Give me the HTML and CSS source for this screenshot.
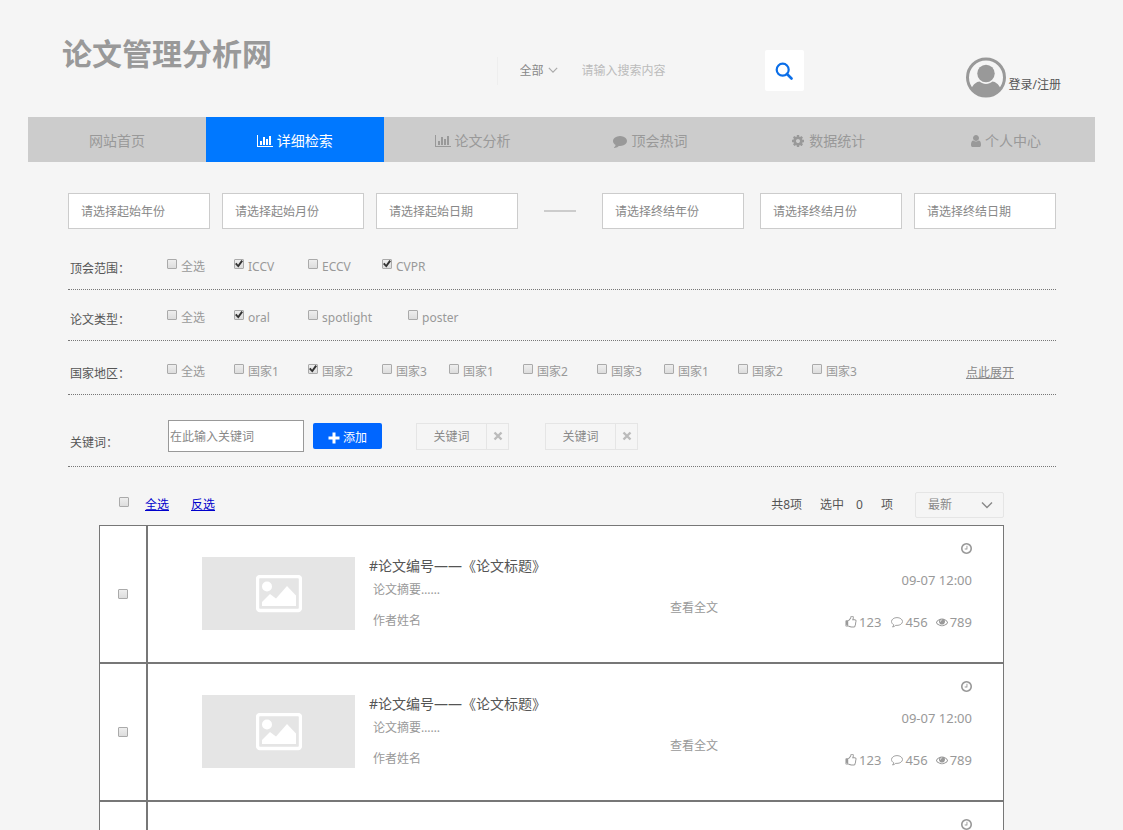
FILE: index.html
```html
<!DOCTYPE html>
<html lang="zh-CN">
<head>
<meta charset="utf-8">
<meta name="viewport" content="width=device-width, initial-scale=1">
<title>论文管理分析网</title>
<link rel="stylesheet" href="styles.css">
</head>
<body>
<svg class="sprite" aria-hidden="true">
  <symbol id="i-chart" viewBox="0 0 2048 1792"><path d="M640 896v512h-256v-512h256zm384-512v1024h-256v-1024h256zm1024 1152v128h-2048v-1536h128v1408h1920zm-640-896v768h-256v-768h256zm384-384v1152h-256v-1152h256z"/></symbol>
  <symbol id="i-comment" viewBox="0 0 1792 1792"><path d="M1792 896q0 174-120 321.5t-326 233-450 85.5q-70 0-145-8-198 175-460 242-49 14-114 22-17 2-30.5-9t-17.5-29v-1q-3-4-.5-12t2-10 4.5-9.5l6-9 7-8.5 8-9q7-8 31-34.5t34.5-38 31-39.5 32.5-51 27-59 26-76q-157-89-247.5-220t-90.5-281q0-130 71-248.5t191-204.5 286-136.5 348-50.5q244 0 450 85.5t326 233 120 321.5z"/></symbol>
  <symbol id="i-cog" viewBox="0 0 1792 1792"><path d="M1152 896q0-106-75-181t-181-75-181 75-75 181 75 181 181 75 181-75 75-181zm512-109v222q0 12-8 23t-20 13l-185 28q-19 54-39 91 35 50 107 138 10 12 10 25t-9 23q-27 37-99 108t-94 71q-12 0-26-9l-138-108q-44 23-91 38-16 136-29 186-7 28-36 28h-222q-14 0-24.5-8.5t-11.5-21.5l-28-184q-49-16-90-37l-141 107q-10 9-25 9-14 0-25-11-126-114-165-168-7-10-7-23 0-12 8-23 15-21 51-66.5t54-70.5q-27-50-41-99l-183-27q-13-2-21-12.5t-8-23.5v-222q0-12 8-23t19-13l186-28q14-46 39-92-40-57-107-138-10-12-10-24 0-10 9-23 26-36 98.5-107.5t94.5-71.5q13 0 26 10l138 107q44-23 91-38 16-136 29-186 7-28 36-28h222q14 0 24.5 8.5t11.5 21.5l28 184q49 16 90 37l142-107q9-9 24-9 13 0 25 10 129 119 165 170 7 8 7 22 0 12-8 23-15 21-51 66.5t-54 70.5q26 50 41 98l183 28q13 2 21 12.5t8 23.5z"/></symbol>
  <symbol id="i-user" viewBox="256 0 1280 1792"><path d="M1536 1399q0 109-62.5 187t-150.5 78h-854q-88 0-150.5-78t-62.5-187q0-85 8.5-160.5t31.5-152 58.5-131 94-89 134.5-34.5q131 128 313 128t313-128q76 0 134.5 34.5t94 89 58.5 131 31.5 152 8.5 160.5zm-256-887q0 159-112.5 271.5t-271.5 112.5-271.5-112.5-112.5-271.5 112.5-271.5 271.5-112.5 271.5 112.5 112.5 271.5z"/></symbol>
  <symbol id="i-clock" viewBox="128 128 1536 1536"><path d="M1024 544v448q0 14-9 23t-23 9h-320q-14 0-23-9t-9-23v-64q0-14 9-23t23-9h224v-352q0-14 9-23t23-9h64q14 0 23 9t9 23zm416 352q0-148-73-273t-198-198-273-73-273 73-198 198-73 273 73 273 198 198 273 73 273-73 198-198 73-273zm224 0q0 209-103 385.5t-279.5 279.5-385.5 103-385.5-103-279.5-279.5-103-385.5 103-385.5 279.5-279.5 385.5-103 385.5 103 279.5 279.5 103 385.5z"/></symbol>
  <symbol id="i-thumb" viewBox="64 64 1664 1664"><path d="M384 1344q0-26-19-45t-45-19-45 19-19 45 19 45 45 19 45-19 19-45zm1152-576q0-51-39-89.5t-89-38.5h-352q0-58 48-159.5t48-160.5q0-98-32-145t-128-47q-26 26-38 85t-30.5 125.5-59.5 109.5q-22 23-77 91-4 5-23 30t-31.5 41-34.5 42.5-40 44-38.5 35.5-40 27-35.5 9h-32v640h32q13 0 31.5 3t33 6.5 38 11 35 11.5 35.5 12.5 29 10.5q211 73 342 73h121q192 0 192-167 0-26-5-56 30-16 47.5-52.5t17.5-73.5-18-69q53-50 53-119 0-25-10-55.5t-25-47.5q32-1 53.5-47t21.5-81zm128-1q0 89-49 163 9 33 9 69 0 77-38 144 3 21 3 43 0 101-60 178 1 139-85 219.5t-227 80.5h-129q-96 0-189.5-22.5t-216.5-65.5q-116-40-138-40h-288q-53 0-90.5-37.5t-37.5-90.5v-640q0-53 37.5-90.5t90.5-37.5h274q36-24 137-155 58-75 107-128 24-25 35.5-85.5t30.5-126.5 62-108q39-37 90-37 84 0 151 32.5t102 101.5 35 186q0 93-48 192h176q104 0 180 76t76 179z"/></symbol>
  <symbol id="i-bubble" viewBox="0 0 12 12"><path d="M6 1.6c3 0 5.500 1.700 5.500 3.900S9 9.400 6 9.400c-.4 0-.8 0-1.200-.1C3.900 10.200 2.800 10.800 1.500 11c.7-.7 1.100-1.400 1.200-2.300C1.300 8 .5 6.800.5 5.500.5 3.300 3 1.600 6 1.600z" fill="none" stroke="currentColor" stroke-width=".9" stroke-linejoin="round"/></symbol>
  <symbol id="i-eye" viewBox="0 0 1792 1792"><path d="M1664 960q-152-236-381-353 61 104 61 225 0 185-131.500 316.500t-316.500 131.500-316.500-131.500-131.500-316.500q0-121 61-225-229 117-381 353 133 205 333.500 326.500t434.500 121.500 434.500-121.500 333.500-326.500zm-720-384q0-20-14-34t-34-14q-125 0-214.500 89.500t-89.500 214.500q0 20 14 34t34 14 34-14 14-34q0-86 61-147t147-61q20 0 34-14t14-34zm848 384q0 34-20 69-140 230-376.500 368.500t-499.500 138.500-499.500-139-376.500-368q-20-35-20-69t20-69q140-229 376.500-368t499.500-139 499.500 139 376.500 368q20 35 20 69z"/></symbol>
  <symbol id="i-chevron" viewBox="0 0 12 12"><path d="M1 3.500l5 5 5-5" fill="none" stroke="currentColor" stroke-width="1.400"/></symbol>
  <symbol id="i-search" viewBox="0 0 18 18"><circle cx="7.700" cy="7.700" r="6" fill="none" stroke="currentColor" stroke-width="2.200"/><path d="M12 12l4.500 4.500" stroke="currentColor" stroke-width="2.600" stroke-linecap="round"/></symbol>
  <symbol id="i-plus" viewBox="0 0 12 12"><path d="M4.500.5h3v4h4v3h-4v4h-3v-4h-4v-3h4z"/></symbol>
  <symbol id="i-times" viewBox="0 0 10 10"><path d="M1.500 1.500l7 7M8.500 1.500l-7 7" stroke="currentColor" stroke-width="2.400"/></symbol>
  <symbol id="i-avatar" viewBox="0 0 40 40"><circle cx="20" cy="20" r="18.500" fill="none" stroke="currentColor" stroke-width="3"/><circle cx="20" cy="16" r="8.700"/><path d="M5.500 31c2-4.500 5-6.500 8-6.900 2 1.600 4 2.400 6.500 2.400s4.500-.8 6.500-2.400c3 .4 6 2.400 8 6.900-3.500 5-8.500 8-14.500 8s-11-3-14.500-8z"/></symbol>
  <symbol id="i-image" viewBox="0 0 46 38"><rect x="1.500" y="1.500" width="43" height="34" rx="2.500" fill="none" stroke="currentColor" stroke-width="3.400"/><circle cx="11" cy="11.500" r="5"/><path d="M6 31v-4l8-8 6 4.500L31 11l9 9.500V31z"/></symbol>
</svg>

<div class="page">
  <header class="header">
    <h1 class="brand">论文管理分析网</h1>
    <form class="search">
      <span class="scope">
        <select class="scope-select" aria-label="搜索范围"><option>全部</option></select>
        <svg class="scope-arrow"><use href="#i-chevron"/></svg>
      </span>
      <input class="search-input" type="text" placeholder="请输入搜索内容" aria-label="搜索内容">
      <button class="search-btn" type="button" aria-label="搜索"><svg class="search-icon"><use href="#i-search"/></svg></button>
    </form>
    <a class="account" href="#"><svg class="avatar"><use href="#i-avatar"/></svg><span class="account-text">登录/注册</span></a>
  </header>

  <nav class="nav">
    <a class="nav-item" href="#">网站首页</a>
    <a class="nav-item active" href="#"><svg class="nav-icon wide"><use href="#i-chart"/></svg>详细检索</a>
    <a class="nav-item" href="#"><svg class="nav-icon wide"><use href="#i-chart"/></svg>论文分析</a>
    <a class="nav-item" href="#"><svg class="nav-icon"><use href="#i-comment"/></svg>顶会热词</a>
    <a class="nav-item" href="#"><svg class="nav-icon"><use href="#i-cog"/></svg>数据统计</a>
    <a class="nav-item" href="#"><svg class="nav-icon slim"><use href="#i-user"/></svg>个人中心</a>
  </nav>

  <main>
    <form class="filters">
      <div class="dates">
        <div class="date-group">
          <input class="date" type="text" placeholder="请选择起始年份" aria-label="起始年份">
          <input class="date" type="text" placeholder="请选择起始月份" aria-label="起始月份">
          <input class="date" type="text" placeholder="请选择起始日期" aria-label="起始日期">
        </div>
        <span class="dash"></span>
        <div class="date-group end">
          <input class="date" type="text" placeholder="请选择终结年份" aria-label="终结年份">
          <input class="date" type="text" placeholder="请选择终结月份" aria-label="终结月份">
          <input class="date" type="text" placeholder="请选择终结日期" aria-label="终结日期">
        </div>
      </div>

      <div class="row">
        <span class="row-label">顶会范围：</span>
        <div class="options">
          <label class="option short"><input class="check" type="checkbox">全选</label>
          <label class="option"><input class="check" type="checkbox" checked>ICCV</label>
          <label class="option"><input class="check" type="checkbox">ECCV</label>
          <label class="option"><input class="check" type="checkbox" checked>CVPR</label>
        </div>
      </div>

      <div class="row">
        <span class="row-label">论文类型：</span>
        <div class="options">
          <label class="option short"><input class="check" type="checkbox">全选</label>
          <label class="option"><input class="check" type="checkbox" checked>oral</label>
          <label class="option long"><input class="check" type="checkbox">spotlight</label>
          <label class="option"><input class="check" type="checkbox">poster</label>
        </div>
      </div>

      <div class="row tall">
        <span class="row-label">国家地区：</span>
        <div class="options">
          <label class="option short"><input class="check" type="checkbox">全选</label>
          <label class="option"><input class="check" type="checkbox">国家1</label>
          <label class="option"><input class="check" type="checkbox" checked>国家2</label>
          <label class="option short"><input class="check" type="checkbox">国家3</label>
          <label class="option"><input class="check" type="checkbox">国家1</label>
          <label class="option"><input class="check" type="checkbox">国家2</label>
          <label class="option short"><input class="check" type="checkbox">国家3</label>
          <label class="option"><input class="check" type="checkbox">国家1</label>
          <label class="option"><input class="check" type="checkbox">国家2</label>
          <label class="option"><input class="check" type="checkbox">国家3</label>
        </div>
        <a class="expand" href="#">点此展开</a>
      </div>

      <div class="row keywords">
        <label class="row-label" for="keyword">关键词：</label>
        <input class="keyword" id="keyword" type="text" placeholder="在此输入关键词">
        <button class="add" type="button"><svg class="add-icon"><use href="#i-plus"/></svg>添加</button>
        <div class="tags">
          <span class="tag"><span class="tag-text">关键词</span><button class="tag-x" type="button" aria-label="删除"><svg class="tag-icon"><use href="#i-times"/></svg></button></span>
          <span class="tag"><span class="tag-text">关键词</span><button class="tag-x" type="button" aria-label="删除"><svg class="tag-icon"><use href="#i-times"/></svg></button></span>
        </div>
      </div>
    </form>

    <section class="results">
      <div class="toolbar">
        <input class="check" type="checkbox" aria-label="选择本页">
        <a class="pick" href="#">全选</a>
        <a class="pick" href="#">反选</a>
        <div class="counts"><span>共8项</span><span>选中</span><span>0</span><span>项</span></div>
        <span class="sort">
          <select class="sort-select" aria-label="排序"><option>最新</option></select>
          <svg class="sort-arrow"><use href="#i-chevron"/></svg>
        </span>
      </div>

      <article class="paper">
        <div class="pick-cell"><input class="check" type="checkbox" aria-label="选择论文"></div>
        <div class="card">
          <div class="thumb"><svg class="thumb-icon"><use href="#i-image"/></svg></div>
          <div class="info">
            <h2 class="title">#论文编号——《论文标题》</h2>
            <p class="abstract">论文摘要……</p>
            <p class="author">作者姓名</p>
          </div>
          <a class="view" href="#">查看全文</a>
          <div class="meta">
            <svg class="clock"><use href="#i-clock"/></svg>
            <time class="time">09-07 12:00</time>
            <div class="stats">
              <span class="stat"><svg class="stat-icon"><use href="#i-thumb"/></svg>123</span>
              <span class="stat"><svg class="stat-icon"><use href="#i-bubble"/></svg>456</span>
              <span class="stat"><svg class="stat-icon"><use href="#i-eye"/></svg>789</span>
            </div>
          </div>
        </div>
      </article>

      <article class="paper">
        <div class="pick-cell"><input class="check" type="checkbox" aria-label="选择论文"></div>
        <div class="card">
          <div class="thumb"><svg class="thumb-icon"><use href="#i-image"/></svg></div>
          <div class="info">
            <h2 class="title">#论文编号——《论文标题》</h2>
            <p class="abstract">论文摘要……</p>
            <p class="author">作者姓名</p>
          </div>
          <a class="view" href="#">查看全文</a>
          <div class="meta">
            <svg class="clock"><use href="#i-clock"/></svg>
            <time class="time">09-07 12:00</time>
            <div class="stats">
              <span class="stat"><svg class="stat-icon"><use href="#i-thumb"/></svg>123</span>
              <span class="stat"><svg class="stat-icon"><use href="#i-bubble"/></svg>456</span>
              <span class="stat"><svg class="stat-icon"><use href="#i-eye"/></svg>789</span>
            </div>
          </div>
        </div>
      </article>

      <article class="paper">
        <div class="pick-cell"><input class="check" type="checkbox" aria-label="选择论文"></div>
        <div class="card">
          <div class="thumb"><svg class="thumb-icon"><use href="#i-image"/></svg></div>
          <div class="info">
            <h2 class="title">#论文编号——《论文标题》</h2>
            <p class="abstract">论文摘要……</p>
            <p class="author">作者姓名</p>
          </div>
          <a class="view" href="#">查看全文</a>
          <div class="meta">
            <svg class="clock"><use href="#i-clock"/></svg>
            <time class="time">09-07 12:00</time>
            <div class="stats">
              <span class="stat"><svg class="stat-icon"><use href="#i-thumb"/></svg>123</span>
              <span class="stat"><svg class="stat-icon"><use href="#i-bubble"/></svg>456</span>
              <span class="stat"><svg class="stat-icon"><use href="#i-eye"/></svg>789</span>
            </div>
          </div>
        </div>
      </article>
    </section>
  </main>
</div>
</body>
</html>
```

FILE: styles.css
```css
* {
  box-sizing: border-box;
}

body {
  margin: 0;
  background: #f5f5f5;
  color: #555;
  font: 12px/20px "Noto Sans", "Noto Sans CJK SC", sans-serif;
}

input,
select,
button {
  margin: 0;
  font: inherit;
  color: inherit;
}

a {
  color: inherit;
  text-decoration: none;
}

svg {
  display: block;
  flex: none;
  fill: currentColor;
}

.sprite {
  position: absolute;
  width: 0;
  height: 0;
}

.page {
  padding: 0 28px;
}

/* Header */
.header {
  display: flex;
  align-items: flex-start;
  padding: 32px 34px 0 34px;
  height: 117px;
}

.brand {
  flex: 1;
  margin: 0;
  color: #999;
  font-size: 30px;
  line-height: 44px;
  font-weight: 700;
}

.search {
  display: flex;
  align-items: center;
  width: 307px;
  margin: 18px 162px 0 0;
}

.scope {
  position: relative;
  width: 82px;
  border-left: 1px solid #eee;
  color: #888;
}

.scope-select {
  appearance: none;
  width: 100%;
  height: 28px;
  padding: 0 0 0 22px;
  border: 0;
  background: none;
}

.scope-arrow {
  position: absolute;
  left: 50px;
  top: 8px;
  width: 10px;
  height: 10px;
  color: #aaa;
  pointer-events: none;
}

.search-input {
  flex: 1;
  min-width: 0;
  height: 28px;
  padding: 0 3px;
  border: 0;
  background: none;
}

.search-input::placeholder {
  color: #bbb;
}

.search-btn {
  display: grid;
  place-items: center;
  width: 39px;
  height: 41px;
  padding: 0;
  border: 0;
  border-radius: 2px;
  background: #fff;
  color: #0a6ee8;
}

.search-icon {
  width: 18px;
  height: 18px;
}

.account {
  display: flex;
  align-items: center;
  gap: 3px;
  margin-top: 25px;
}

.account-text {
  padding-top: 14px;
}

.avatar {
  width: 40px;
  height: 41px;
  color: #999;
}

/* Navigation */
.nav {
  display: grid;
  grid-template-columns: repeat(6, 1fr);
  background: #ccc;
}

.nav-item {
  display: flex;
  align-items: center;
  justify-content: center;
  gap: 4px;
  height: 45px;
  padding-top: 2px;
  color: #999;
  font-size: 14px;
}

.nav-item.active {
  background: #0078ff;
  color: #fff;
}

.nav-icon {
  width: 14px;
  height: 14px;
}

.nav-icon.wide {
  width: 16px;
}

.nav-icon.slim {
  width: 10px;
}

/* Filters */
.filters {
  padding: 31px 39px 0 40px;
}

.dates {
  display: flex;
  align-items: center;
  gap: 26px;
  margin-bottom: 10px;
}

.date-group {
  display: flex;
  flex: 1 1 auto;
  gap: 12px;
  min-width: 0;
}

.date-group.end .date:first-child {
  margin-right: 4px;
}

.date {
  flex: 1 1 auto;
  width: 142px;
  min-width: 0;
  height: 36px;
  padding: 0 12px;
  border: 1px solid #ccc;
  background: #fff;
}

.date::placeholder,
.keyword::placeholder {
  color: #888;
}

.dash {
  flex: none;
  width: 32px;
  height: 2px;
  background: #ccc;
}

.row {
  display: flex;
  align-items: flex-start;
  padding: 18px 0 10px;
  border-bottom: 1px dotted #777;
}

.row.tall {
  padding-top: 21px;
}

.row-label {
  width: 99px;
  padding: 2px 0 0 2px;
}

.options {
  display: flex;
  flex: 1;
  color: #999;
}

.option {
  display: flex;
  gap: 4px;
  width: 74px;
  white-space: nowrap;
}

.option.short {
  width: 67px;
}

.option.long {
  width: 100px;
}

.check {
  appearance: none;
  flex: none;
  width: 10px;
  height: 10px;
  border: 1px solid #aaa;
  border-radius: 1px;
  background: linear-gradient(#eee, #ddd);
}

.option .check {
  margin-top: 2px;
}

.check:checked::after {
  content: "";
  display: block;
  width: 8px;
  height: 8px;
  background: #333;
  clip-path: polygon(0 50%, 20% 35%, 38% 58%, 80% 0, 100% 15%, 42% 95%);
}

.expand {
  padding: 1px 42px 0 0;
  color: #888;
  text-decoration: underline;
}

.row.keywords {
  align-items: center;
  padding: 24px 0 13px;
}

.keywords .row-label {
  width: 100px;
  padding-top: 14px;
}

.keyword {
  width: 136px;
  height: 32px;
  padding: 0 1px;
  border: 1px solid #999;
  background: #fff;
}

.add {
  display: flex;
  align-items: center;
  justify-content: center;
  gap: 3px;
  width: 69px;
  height: 26px;
  margin-left: 9px;
  padding: 3px 0 0;
  border: 0;
  border-radius: 2px;
  background: #06f;
  color: #fff;
}

.add-icon {
  width: 12px;
  height: 12px;
}

.tags {
  display: flex;
  gap: 36px;
  margin-left: 34px;
}

.tag {
  display: flex;
  width: 93px;
  height: 27px;
  border: 1px solid #e5e5e5;
  color: #888;
}

.tag-text {
  flex: 1;
  padding-top: 3px;
  text-align: center;
}

.tag-x {
  display: grid;
  place-items: center;
  width: 22px;
  padding: 0;
  border: 0;
  border-left: 1px solid #e5e5e5;
  background: none;
  color: #bbb;
}

.tag-icon {
  width: 10px;
  height: 10px;
}

/* Results */
.results {
  padding: 25px 91px 0 71px;
}

.toolbar {
  display: flex;
  align-items: center;
  height: 26px;
  margin-bottom: 7px;
  padding-left: 20px;
}

.toolbar .check {
  margin-bottom: 6px;
}

.pick {
  margin-left: 16px;
  color: #0000cc;
  text-decoration: underline;
}

.pick + .pick {
  margin-left: 22px;
}

.counts {
  display: flex;
  gap: 18px;
  margin-left: auto;
}

.counts span:nth-child(3) {
  margin-left: -6px;
}

.sort {
  position: relative;
  width: 89px;
  margin-left: 22px;
}

.sort-select {
  appearance: none;
  display: block;
  width: 100%;
  height: 26px;
  padding: 0 12px;
  border: 1px solid #e5e5e5;
  border-radius: 2px;
  background: none;
  color: #888;
}

.sort-arrow {
  position: absolute;
  right: 11px;
  top: 7px;
  width: 12px;
  height: 12px;
  color: #888;
  pointer-events: none;
}

.paper {
  display: flex;
  min-height: 138px;
}

.pick-cell,
.card {
  border: 1px solid #777;
  background: #fff;
}

.pick-cell {
  display: grid;
  place-items: center;
  width: 48px;
}

.card {
  display: flex;
  flex: 1;
  padding: 0 31px 0 54px;
  color: #999;
}

.thumb {
  display: grid;
  place-items: center;
  width: 153px;
  height: 73px;
  margin-top: 31px;
  background: #e5e5e5;
  color: #fff;
}

.thumb-icon {
  width: 46px;
  height: 38px;
}

.info {
  flex: 1;
  padding: 30px 0 0 14px;
}

.title {
  margin: 0;
  color: #555;
  font-size: 14px;
  line-height: 20px;
  font-weight: 400;
}

.abstract {
  margin: 4px 0 0 4px;
}

.author {
  margin: 11px 0 0 4px;
}

.view {
  padding-top: 72px;
}

.meta {
  display: flex;
  flex-direction: column;
  align-items: flex-end;
  width: 254px;
  padding-top: 17px;
  font-size: 13px;
}

.clock {
  width: 11px;
  height: 11px;
}

.time {
  margin: 16px 0 22px;
}

.stats {
  display: flex;
  gap: 8px;
}

.stat {
  display: flex;
  align-items: center;
  gap: 2px;
}

.stat:first-child {
  margin-right: 2px;
}

.stat-icon {
  width: 12px;
  height: 12px;
}
```
